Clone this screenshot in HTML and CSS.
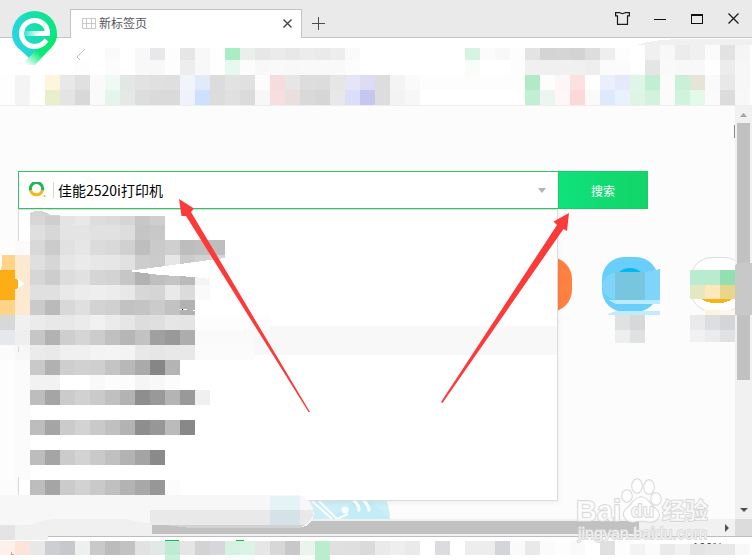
FILE: index.html
```html
<!DOCTYPE html>
<html lang="zh-CN">
<head>
<meta charset="utf-8">
<title>新标签页</title>
<link rel="stylesheet" href="styles.css">
</head>
<body>
<div class="browser">
  <header class="titlebar">
    <svg class="logo" viewBox="0 0 60 70" aria-hidden="true">
      <defs>
        <linearGradient id="pin" x1="0" y1=".7" x2="1" y2=".3"><stop offset="0" stop-color="#2bd3ee"/><stop offset=".55" stop-color="#18dfb0"/><stop offset="1" stop-color="#08e77b"/></linearGradient>
        <linearGradient id="tail" gradientUnits="userSpaceOnUse" x1="50" y1="40" x2="28" y2="66"><stop offset="0" stop-color="#06e96b"/><stop offset=".5" stop-color="#0be979"/><stop offset="1" stop-color="#fff"/></linearGradient>
        <linearGradient id="bar"><stop offset="0" stop-color="#fff" stop-opacity=".1"/><stop offset=".55" stop-color="#fff"/></linearGradient>
      </defs>
      <path d="M34.500 11A22.500 22.500 0 0 1 57 33.500Q57 42 50 49L38 58H29Q24 53 18 48Q12 42 12 33.500A22.500 22.500 0 0 1 34.500 11Z" fill="url(#pin)"/>
      <path d="M57 34Q57 42 50 49L35 65H21L45 42Z" fill="url(#tail)"/>
      <path d="M24 31H50V36H24Z" fill="url(#bar)"/>
      <path d="M47.500 36V33C47.500 26 42 20.500 34.500 20.500A13 13 0 1 0 34.500 46.500Q42 46.500 46.500 40" fill="none" stroke="#fff" stroke-width="5"/>
    </svg>
    <div class="tab">
      <svg width="14" height="11" viewBox="0 0 14 11" fill="none" stroke="#c9c9cb" aria-hidden="true"><path d="M.5.5h13v10H.5zM4.500.5v10M9.500.5v10M.5 5.500h13"/></svg>
      <span class="tab-title">新标签页</span>
      <button aria-label="关闭标签页"><svg width="9" height="9" viewBox="0 0 9 9" stroke="#3d3d42" stroke-width="1.300"><path d="M.5.5l8 8M8.500.5l-8 8"/></svg></button>
    </div>
    <button class="new-tab" aria-label="新建标签页"><svg width="13" height="13" viewBox="0 0 13 13" stroke="#4b4b50"><path d="M6.500 0v13M0 6.500h13"/></svg></button>
    <nav class="window-buttons">
      <button aria-label="皮肤"><svg width="15" height="13" viewBox="0 0 15 13" fill="none" stroke="#1b1b1b" stroke-width="1.200"><path d="M.6.6H4.500Q7.500 2.500 10.500.6H14.400V3.800H12.500V12.400H2.500V3.800H.6Z"/></svg></button>
      <button aria-label="最小化"><svg width="12" height="11" viewBox="0 0 12 11"><path d="M0 6h12v1H0z" fill="#111"/></svg></button>
      <button aria-label="最大化"><svg width="12" height="10" viewBox="0 0 12 10"><path d="M0 0h12v10H0zM1 2v7h10V2z" fill="#111" fill-rule="evenodd"/></svg></button>
      <button aria-label="关闭"><svg width="11" height="11" viewBox="0 0 11 11" stroke="#1b1b1b" stroke-width="1.300"><path d="M.5.5l10 10M10.500.5l-10 10"/></svg></button>
    </nav>
  </header>
  <div class="toolbar">
    <button aria-label="后退"><svg width="9" height="16" viewBox="0 0 9 16" fill="none" stroke="#bbb"><path d="M8.500.5L1 8l7.500 7.500"/></svg></button>
    <button aria-label="前进"><svg width="9" height="16" viewBox="0 0 9 16" fill="none" stroke="#bbb"><path d="M.5.5L8 8 .5 15.500"/></svg></button>
  </div>
  <div class="bookmarks"></div>
  <div class="viewport">
    <main class="page">
      <form class="search">
        <div class="field">
          <svg width="17" height="17" viewBox="0 0 17 17" fill="none" stroke-width="3" aria-hidden="true"><path d="M1.700 8.500a6.100 6.100 0 1 1 11.600 0" stroke="#21b558"/><path d="M1.700 8.500a6.100 6.100 0 0 0 11.600 0" stroke="#f8b51c"/><circle cx="15.500" cy="14" r="1" fill="#f8b51c"/></svg>
          <input type="text" aria-label="搜索内容" value="佳能2520i打印机">
          <svg width="8" height="5" viewBox="0 0 8 5" aria-hidden="true"><path d="M0 0h8L4 5z" fill="#b3b3b3"/></svg>
        </div>
        <button type="button">搜索</button>
        <ul class="suggestions"><li></li><li></li><li></li><li></li><li class="active"></li></ul>
      </form>
      <div class="shortcuts">
        <i class="tile amber"></i><i class="tile"></i><i class="tile"></i><i class="tile"></i><i class="tile"></i><i class="tile"></i><i class="tile orange"></i><i class="tile blue"></i><i class="tile white"></i>
      </div>
      <svg class="banner" viewBox="0 0 80 19" aria-hidden="true"><path d="M0 0H76Q80 8 80 19H0Z" fill="#cbeff8"/><path d="M20 19L45 0H60L80 19Z" fill="#bcebf5" opacity=".6"/><path d="M2 1L22 19M9 1L27 19L38 14" fill="none" stroke="#fff" stroke-width="2"/><circle cx="35" cy="10" r="3.500" fill="#fff"/><path d="M43 0Q49 4 49 10M53 0Q58 4 59 10" stroke="#fff" stroke-width="3" fill="none" stroke-linecap="round"/></svg>
    </main>
    <div class="vscroll">
      <svg width="7" height="4" viewBox="0 0 7 4"><path d="M0 4h7L3.500 0z" fill="#a3a3a3"/></svg>
      <span class="thumb"></span>
      <svg width="8" height="4" viewBox="0 0 8 4"><path d="M0 0h8L4 4z" fill="#505050"/></svg>
    </div>
    <div class="hscroll">
      <span class="thumb"></span>
      <svg width="4" height="8" viewBox="0 0 4 8"><path d="M0 0v8l4-4z" fill="#505050"/></svg>
    </div>
    <div class="corner"></div>
  </div>
  <footer class="status">100%</footer>

  <svg class="overlay mosaic" viewBox="0 0 752 560" aria-hidden="true"></svg>
  <svg class="overlay" viewBox="0 0 752 560" aria-hidden="true">
    <g fill="#fb3a3a"><path d="M179 199L194 208.500L191 212L310 412L308.500 412L186 216L181.500 216Z"/><path d="M569 213L553.500 221.500L557 225L441 402L442.500 403L563.500 229L567 231Z"/></g>
    <g class="watermark">
      <text class="brand" x="576" y="521">Bai</text>
      <ellipse cx="627" cy="496" rx="5" ry="6"/><ellipse cx="637" cy="486" rx="5" ry="7"/><ellipse cx="649" cy="487" rx="5" ry="7"/><ellipse cx="656" cy="499" rx="5" ry="6"/>
      <path d="M641 497C634 497 632 505 626 509C621 514 625 522 633 522Q641 520 649 522C659 522 662 514 656 509C650 505 648 497 641 497Z"/>
      <text class="du" x="631" y="517">du</text>
      <text class="brand-cn" x="662" y="519">经验</text>
      <text class="site" x="578" y="539">jingyan.baidu.com</text>
    </g>
  </svg>
</div>
<script src="mosaic.js"></script>
</body>
</html>
```
FILE: styles.css
```css
* { box-sizing: border-box; }
body { margin: 0; font: 12px "Noto Sans CJK SC", sans-serif; }
button { border: 0; padding: 0; background: none; font: inherit; display: grid; place-items: center; }
.browser { position: relative; display: flex; flex-direction: column; height: 100vh; overflow: hidden; background: #fff; }
.titlebar { position: relative; flex: none; display: flex; align-items: flex-end; height: 38px; padding-left: 70px; background: #eaeaea; border-bottom: 1px solid #c4c4c4; }
.logo { position: absolute; left: 0; top: 0; width: 60px; height: 70px; z-index: 4; }
.tab { display: flex; align-items: center; gap: 3px; width: 232px; height: 29px; margin-bottom: -1px; padding: 0 9px 2px 11px; background: #fff; border: 1px solid #c4c4c4; border-bottom: 0; color: #55555c; }
.tab-title { flex: 1; line-height: 26px; }
.tab svg { flex: none; }
.new-tab { width: 32px; height: 28px; }
.window-buttons { display: flex; margin-left: auto; }
.window-buttons button { width: 37px; height: 37px; }
.toolbar { flex: none; display: flex; gap: 26px; align-items: center; height: 37px; padding-left: 76px; }
.bookmarks { flex: none; height: 31px; border-bottom: 1px solid #eee; }
.viewport { flex: 1; min-height: 0; display: grid; grid-template-columns: 1fr 17px; grid-template-rows: 1fr 17px; border-bottom: 1px solid #bdbdbd; }
.page { position: relative; min-width: 0; overflow: hidden; background: #fcfcfc; padding-top: 65px; }
.search { position: relative; z-index: 1; display: flex; width: 630px; height: 38px; margin-left: 18px; }
.field { flex: 1; display: flex; align-items: center; padding: 0 12px 0 10px; background: #fff; border: 1px solid #2bc665; border-right: 0; }
.field input { flex: 1; min-width: 0; height: 16px; margin-left: 7px; padding: 0 0 0 4px; border: 0; border-left: 1px solid #d5d5d5; outline: 0; font: 14px/16px "Noto Sans CJK SC", sans-serif; color: #000; }
.search > button { width: 90px; background: linear-gradient(90deg, #0fe27b, #12d568); border: 1px solid #12d168; color: #fff; }
.suggestions { position: absolute; top: 38px; left: 0; width: 540px; height: 292px; margin: 0; padding: 0; list-style: none; background: #fff; border: 1px solid #dcdcdc; box-shadow: 1px 2px 4px #0000000d; }
.suggestions li { height: 29px; }
.suggestions .active { background: #f8f8f8; }
.shortcuts { display: flex; gap: 32px; width: 760px; margin: 48px 0 0 -14px; }
.tile { flex: none; width: 56px; height: 55px; border-radius: 22px; }
.amber { background: #fdad16; }
.orange { width: 58px; margin-right: -2px; background: #ff8040; }
.blue { background: radial-gradient(circle at 50% 50%, #00b9ef 16px, #6acefa 17px); }
.white { background: #fff; border: 1px solid #ddd; }
.banner { position: absolute; left: 310px; bottom: 0; width: 80px; height: 19px; }
.vscroll { display: flex; flex-direction: column; align-items: center; padding: 7px 0; background: #f1f1f1; }
.vscroll .thumb { width: 13px; height: 257px; margin: 6px 0 auto; background: #c1c1c1; }
.hscroll { display: flex; align-items: center; background: #f1f1f1; padding: 0 6px 0 152px; }
.hscroll .thumb { width: 487px; height: 13px; margin-right: auto; background: #c1c1c1; }
.corner { background: #dcdcdc; }
.status { flex: none; height: 23px; padding: 2px 29px 0 0; text-align: right; font: 12px/18px "Liberation Sans", sans-serif; color: #444; }
.overlay { position: absolute; left: 0; top: 0; width: 752px; height: 560px; pointer-events: none; z-index: 2; }
.mosaic { shape-rendering: crispEdges; }
.watermark { fill: #fff; fill-opacity: .7; stroke: #d4d4d4; stroke-width: 1.5px; paint-order: stroke; }
.brand { font: bold 29px "Liberation Sans", sans-serif; }
.du { font: bold 19px "Liberation Sans", sans-serif; }
.brand-cn { font: bold 23px "Noto Sans CJK SC", sans-serif; }
.site { font: 16px "Liberation Sans", sans-serif; }
```
FILE: mosaic.js
```javascript
// Privacy mosaic: [top, height, left, colours]. Cells are 15px wide;
// two digits mean a grey level, "-" leaves a cell clear.
const rows = [
  [48, 12, 75, '- - fa ff f8 e8e8ea fd e6 f8 fe a8edc3 ebefec e7 eb e8 ec ea ed fa'],
  [60, 15, 75, 'fd - fc ff f8 f8 fd ed f8 fe e5faed fc f8 f9 f8 f9 f9 f9 fc'],
  [75, 15, 0, 'fe f4 fe fdf5dd e8 e0 fa f0faf4 e2e7e4 e2 e0 df f2f4fb e1eafb dc e2 e0 fc f5dddd e6 dd dc e6 e5e5f8 dcdcf4 dd f4 fa fd fd fd fd fd fd fd b2eac8 fd fcf7f6 fce1e0 fe e9effd e4eafc dff5e7 c2efd2 fb c8f1d7 e6e3d7 fa e8 f7'],
  [90, 15, 0, 'fe f4 ff e9efcc e2e5e3 d8 fa e4f6ec e4e9e6 dd da da f0f2fb cde0fd dc e0 db f7 f7dfdf e9dfdd d9 d6 e8 dcddf9 c6c7ef dd f3 f7 ff ff ff ff ff ff ff c2efd3 eaf6ef fdf8f7 fcd8d7 fa dfe9fd e9f0fe def5e6 d2f2de fb d0f3de e3f9ea fb dc f8'],
  [48, 12, 465, 'd6f4e1 fb f8 fd e3 d4 d5 d3 dd ee fd ff'],
  [45, 15, 645, 'f0 f8 ec f0 fb e2 f5'],
  [60, 15, 465, 'f8fdf9 ff ff fd f0 f0 f0 f0 ee fb fb ff e5 f9 f8 f8 fe ec f7'],
  [241, 239, 0, 'fd fb'],
  [216, 9, 30, 'd7 ce e4 e8 dd db d5 c7 ce'],
  [225, 15, 30, 'df d7 e4 e4 e1 e1 dd c5 c8'],
  [240, 15, 30, 'd8 cb e1 e6 db d9 d0 be ca cf bd c0 be'],
  [255, 15, 0, 'fdd488 fbeacf df d6 e6 ea e7 e6 e1 cd cb e6 cb d2 d5'],
  [270, 15, 0, 'fdae16 fbeacf d6 cd dd e1 d5 d3 c6 b2 bf c4 ba f4'],
  [285, 15, 0, 'fdae16 fbeacf e0 e0 e9 ec ee ec e8 d7 d5 e9 db fa'],
  [300, 15, 0, 'fdd488 fbeacf ca ba d8 df d3 d0 c2 c4 cb c2 b2'],
  [315, 15, 0, 'd6d8da f0 eb e8 e8 eb f1 eb e6 dd df e6 e4 fd fd fd fd fd'],
  [330, 15, 0, 'e5e8ec ef c6 b2 ce d5 cc c0 b6 c2 a0 99 ad fa fa fa fa'],
  [345, 15, 0, 'fb f7 eb e9 f0 f0 f3 f4 f3 e8 e6 e8 e8 fb fb fb fb'],
  [360, 15, 30, 'c9 b1 ce d1 cf c4 b8 aa 86 b4'],
  [375, 15, 30, 'f2 f2 ff ff f9 fc fc f5 f8 fc'],
  [390, 15, 30, 'bd a5 cb d1 ca c0 b3 8e 99 b4 99 f0'],
  [420, 15, 30, 'bd a5 cb d3 c9 c0 b3 8e 97 bb 88'],
  [450, 15, 30, 'bd a5 cb d3 c9 c0 b3 a4 8a'],
  [480, 15, 30, 'bd a5 cb d2 c9 c0 b3 a8 97 fc'],
  [541, 14, 0, 'fff0ea fde4d8 e8 cdced2 c6c8cc ecf0ee c9 bc c2 e2 dfeae4 bfead4 e5 d3 d6d6dc d5f2e2 d9f4e5 e6 d7 c8 e9f4ed b9edce e0 dfdfe2 da ea ee ea ff dcdce0 ff ed ed d4d5da fa e9 fb fd fa ff e0 fd'],
  [544, 11, 630, 'f3 fb ea f2 e4 e8 e8 f8'],
  [555, 5, 165, 'caf0da - - - f8fdfa f8fdfa - - - f8fdfa b9edce'],
  [315, 15, 615, 'e0e1e3 d7d8da'],
  [330, 13, 615, 'ecefed e0e1e3'],
  [270, 15, 690, 'b9ebcf b9ebcf 92dfb1'],
  [285, 14, 690, 'e4e8c1 fee8bb e8d78b'],
  [310, 5, 690, 'fb fff2dc fbf7eb'],
  [315, 15, 690, 'eaeaec dddee2 d3d5d9'],
  [330, 12, 690, 'f1 eaebed e0e1e3'],
];

// Brush strokes: [path, fill], painted before or after the cells.
const under = [
  ['M637 45Q650 40 680 39H752V45Z', '#f0f0f0'],
  ['M602 285Q604 274 617 272H646L660 269V300H617Q604 299 602 285Z', '#7ed4f9'],
  ['M608 300H660V304H616Z', '#baeafd'],
  ['M608 314L616 311H660V315H608Z', '#c1ebfd'],
  ['M615 272H645V300H615Z', '#77c5df'],
  ['M699 298H734Q717 309 699 298Z', '#fbb31b'],
  ['M735 265Q743 261 752 263V315H735Z', '#c8c8c8'],
  ['M30 216V213Q40 208 51 215H60V216Z', '#d4d4d4'],
];
const over = [
  ['M0 255H2V266Q0 270 0 274Z', '#fcfcfc'],
  ['M0 270H15V279L18 280V288L15 289V300H0Z', '#fdae16'],
  ['M18 279L25 284L18 288Z', '#fff'],
  ['M128 271L225 258V270H210V279H195V277L160 275Z', '#fff'],
  ['M195 277L210 279V285H195Z', '#f4f4f4'],
  ['M180 309H187V310H180ZM193 310H195V311H193Z', '#fff'],
  ['M182 309H183V310H182Z', '#000'],
  ['M0 495H300Q313 501 314 513Q312 527 300 527H152V534H150L48 536H0Z', '#f7f7f7'],
  ['M152 524H190V528H300Q308 527 312 521H320V534H152Z', '#c1c1c1'],
  ['M150 510H314Q312 522 305 525H150Z', '#e9e9e9'],
  ['M165 525H305L300 528H190Z', '#d2d2d2'],
  ['M270 496H300V510H270Z', '#e4f3f6'],
  ['M270 510H300V525H270Z', '#d4e3e8'],
  ['M30 525Q40 520 55 519H125L152 524V536H48L30 530Z', '#f0f0f0'],
  ['M0 525H15V540H0Z', '#e4e4e4'],
  ['M15 525H30L48 535V540H15Z', '#f0f0f0'],
  ['M48 536H152V537H48Z', '#bdbdbd'],
  ['M165 540H179V541H165ZM236 540H244V541H236Z', '#12ba56'],
  ['M11 552H12V554H14V555H11Z', '#ee9d78'],
  ['M18 346H19V352H18ZM18 477H19V492H18Z', '#d8d8d8'],
  ['M734 125H735V138H734Z', '#888'],
];

const svg = document.querySelector('.mosaic');
function paint(d, fill) {
  const p = document.createElementNS('http://www.w3.org/2000/svg', 'path');
  p.setAttribute('d', d);
  p.setAttribute('fill', fill);
  svg.appendChild(p);
}
under.forEach(([d, fill]) => paint(d, fill));
rows.forEach(([y, h, x, cells]) => cells.split(' ').forEach((c, i) => {
  if (c === '-') return;
  const left = x + i * 15;
  const right = Math.min(left + 15, y > 240 && x === 690 ? 735 : 752);
  paint(`M${left} ${y}H${right}V${y + h}H${left}Z`, '#' + (c.length === 2 ? c.repeat(3) : c));
}));
over.forEach(([d, fill]) => paint(d, fill));
```
